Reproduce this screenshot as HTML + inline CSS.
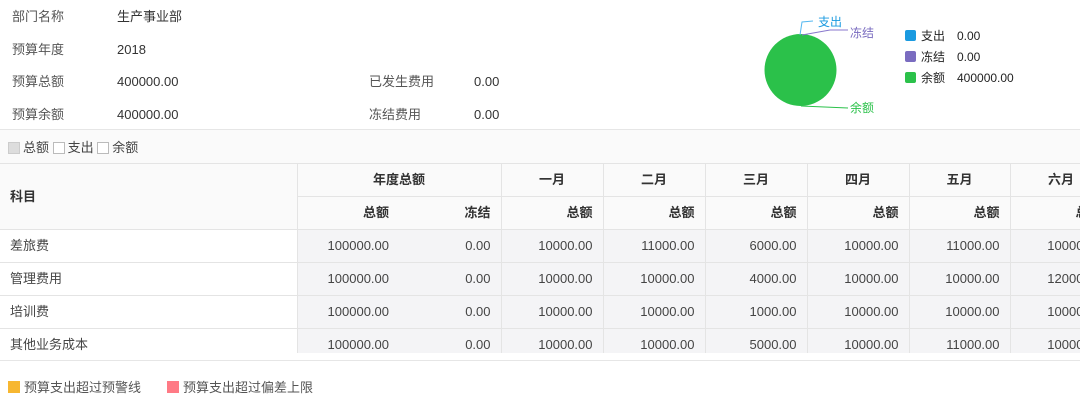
<!DOCTYPE html>
<html><head><meta charset="utf-8"><style>
*{margin:0;padding:0;box-sizing:border-box}
body{width:1080px;height:410px;overflow:hidden;background:#fff;font-family:"Liberation Sans","Noto Sans CJK SC",sans-serif;font-size:13px;line-height:16px;color:#333;position:relative}
.a{position:absolute;white-space:nowrap}
.lbl{color:#555}
table{position:absolute;left:0;top:163px;border-collapse:collapse;table-layout:fixed}
td,th{border:1px solid #e4e4e4;height:33px;line-height:16px;padding:0 10px;font-size:13px;white-space:nowrap;overflow:hidden;vertical-align:middle}
th{background:#fafafa;font-weight:bold;color:#333}
td{background:#f4f4f6;text-align:right;color:#444}
td.n{background:#fff;text-align:left;border-left:none}
th.f{border-left:none}
th.r{text-align:right}
.nl{border-right:none}
.nl2{border-left:none}
.cb{display:inline-block;width:12px;height:12px;border:1px solid #bbb;background:#fff;vertical-align:-2px;margin-right:3px}
</style></head><body>
<div class="a lbl" style="left:12px;top:9px">部门名称</div><div class="a" style="left:117px;top:9px">生产事业部</div>
<div class="a lbl" style="left:12px;top:42px">预算年度</div><div class="a" style="left:117px;top:42px">2018</div>
<div class="a lbl" style="left:12px;top:74px">预算总额</div><div class="a" style="left:117px;top:74px">400000.00</div>
<div class="a lbl" style="left:369px;top:74px">已发生费用</div><div class="a" style="left:474px;top:74px">0.00</div>
<div class="a lbl" style="left:12px;top:107px">预算余额</div><div class="a" style="left:117px;top:107px">400000.00</div>
<div class="a lbl" style="left:369px;top:107px">冻结费用</div><div class="a" style="left:474px;top:107px">0.00</div>
<svg class="a" style="left:740px;top:0" width="340" height="130">
<circle cx="60.5" cy="70" r="36" fill="#2bc14a"/>
<polyline points="60,35 62,22 73,21" fill="none" stroke="#55b8f0" stroke-width="1"/>
<polyline points="62,35 90,30 108,30" fill="none" stroke="#8877cc" stroke-width="1"/>
<polyline points="61,106 108,108" fill="none" stroke="#2bc14a" stroke-width="1"/>
<text x="78" y="26" font-size="12" fill="#1a9ae0">支出</text>
<text x="110" y="37" font-size="12" fill="#7a6cc0">冻结</text>
<text x="110" y="112" font-size="12" fill="#2bc14a">余额</text>
<rect x="165" y="30" width="11" height="11" rx="2" fill="#1a9ae0"/>
<rect x="165" y="51" width="11" height="11" rx="2" fill="#7a6cc0"/>
<rect x="165" y="72" width="11" height="11" rx="2" fill="#2bc14a"/>
<g font-size="12" fill="#222"><text x="181" y="40">支出</text><text x="217" y="40">0.00</text>
<text x="181" y="61">冻结</text><text x="217" y="61">0.00</text>
<text x="181" y="82">余额</text><text x="217" y="82">400000.00</text></g>
</svg>
<div class="a" style="left:0;top:129px;width:1080px;height:35px;background:#fafafa;border-top:1px solid #e6e6e6"></div>
<div class="a" style="left:8px;top:140px;color:#444"><span class="cb" style="background:#ddd;border-color:#ccc"></span>总额 <span class="cb"></span>支出 <span class="cb"></span>余额</div>
<table style="width:1112px">
<colgroup><col style="width:297px"><col style="width:102px"><col style="width:102px"><col style="width:102px"><col style="width:102px"><col style="width:102px"><col style="width:102px"><col style="width:101px"><col style="width:102px"></colgroup>
<tr><th rowspan="2" class="f" style="text-align:left">科目</th><th colspan="2">年度总额</th><th>一月</th><th>二月</th><th>三月</th><th>四月</th><th>五月</th><th>六月</th></tr>
<tr><th class="r nl">总额</th><th class="r nl2">冻结</th><th class="r">总额</th><th class="r">总额</th><th class="r">总额</th><th class="r">总额</th><th class="r">总额</th><th class="r">总额</th></tr>
<tr><td class="n">差旅费</td><td class="nl">100000.00</td><td class="nl2">0.00</td><td>10000.00</td><td>11000.00</td><td>6000.00</td><td>10000.00</td><td>11000.00</td><td>10000.00</td></tr>
<tr><td class="n">管理费用</td><td class="nl">100000.00</td><td class="nl2">0.00</td><td>10000.00</td><td>10000.00</td><td>4000.00</td><td>10000.00</td><td>10000.00</td><td>12000.00</td></tr>
<tr><td class="n">培训费</td><td class="nl">100000.00</td><td class="nl2">0.00</td><td>10000.00</td><td>10000.00</td><td>1000.00</td><td>10000.00</td><td>10000.00</td><td>10000.00</td></tr>
<tr><td class="n">其他业务成本</td><td class="nl">100000.00</td><td class="nl2">0.00</td><td>10000.00</td><td>10000.00</td><td>5000.00</td><td>10000.00</td><td>11000.00</td><td>10000.00</td></tr>
</table>
<div class="a" style="left:0;top:353px;width:1080px;height:57px;background:#fff"></div>
<div class="a" style="left:0;top:360px;width:1080px;height:1px;background:#e6e6e6"></div>
<div class="a" style="left:8px;top:381px;width:12px;height:12px;background:#f7b731"></div>
<div class="a lbl" style="left:24px;top:380px">预算支出超过预警线</div>
<div class="a" style="left:167px;top:381px;width:12px;height:12px;background:#ff7a85"></div>
<div class="a lbl" style="left:183px;top:380px">预算支出超过偏差上限</div>
</body></html>
